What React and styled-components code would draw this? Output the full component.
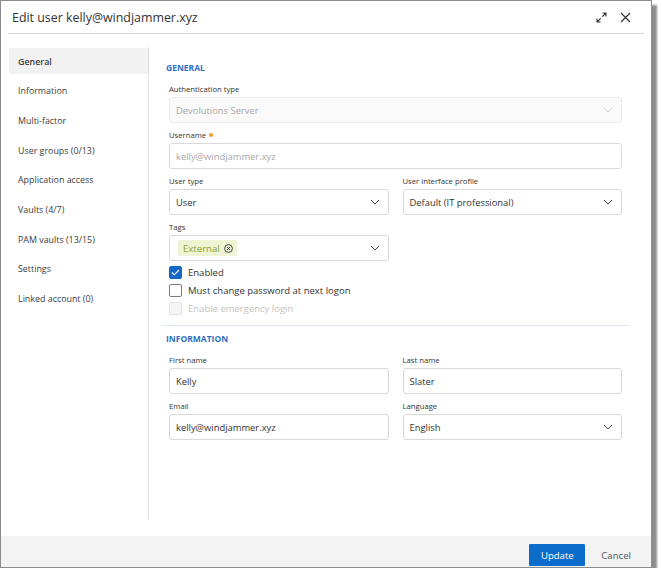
import React from "react";
import styled, { createGlobalStyle } from "styled-components";

const Global = createGlobalStyle`
  html, body { margin: 0; padding: 0; background: #ffffff; }
  body { font-family: "Open Sans", "Noto Sans", sans-serif; color: #333; }
  * { box-sizing: border-box; }
`;

const Dialog = styled.div`
  width: 652px;
  height: 568px;
  border: 1px solid #8c8c8c;
  background: #fff;
  box-shadow: 5px 5px 2px rgba(0, 0, 0, 0.45);
  display: flex;
  flex-direction: column;
`;

const Header = styled.div`
  height: 33px;
  margin: 0 7px;
  padding: 0 4px;
  border-bottom: 1px solid #d6d6d6;
  display: flex;
  align-items: center;
  justify-content: space-between;
  flex: none;
`;

const Title = styled.div`
  font-size: 12.4px;
  color: #333;
`;

const HeaderIcons = styled.div`
  display: flex;
  align-items: center;
  gap: 13px;
  padding-right: 9px;
  color: #333;
`;

const Body = styled.div`
  flex: 1;
  display: flex;
  padding: 13px 0 16px 8px;
`;

const Sidebar = styled.nav`
  width: 140px;
  border-right: 1px solid #e1e1e1;
  display: flex;
  flex-direction: column;
  padding-top: 1px;
`;

const NavItem = styled.div`
  height: 26px;
  margin-bottom: 3.7px;
  padding-left: 9px;
  display: flex;
  align-items: center;
  font-size: 8.9px;
  color: #3c3c3c;
  background: ${(p) => (p.$active ? "#f2f2f2" : "transparent")};
  font-weight: ${(p) => (p.$active ? 600 : 400)};
`;

const Content = styled.div`
  flex: 1;
  padding: 15px 21px 0 13px;
  display: flex;
  flex-direction: column;
`;

const SectionTitle = styled.div`
  height: 12px;
  line-height: 12px;
  font-size: 8.5px;
  font-weight: 700;
  color: #2f6fc4;
  margin-left: 4px;
  margin-bottom: 9px;
`;

const Fields = styled.div`
  padding: 0 8px 0 7px;
  display: grid;
  grid-template-columns: 1fr 1fr;
  column-gap: 14px;
  row-gap: 6px;
`;

const Field = styled.div`
  grid-column: ${(p) => (p.$full ? "1 / span 2" : "auto")};
  display: flex;
  flex-direction: column;
`;

const Label = styled.div`
  height: 12px;
  line-height: 12px;
  font-size: 7.7px;
  color: #333;
  margin-bottom: 2px;
  display: flex;
  align-items: center;
  gap: 3px;
`;

const Required = styled.span`
  width: 4px;
  height: 4px;
  border-radius: 50%;
  background: #f29d1b;
`;

const Input = styled.div`
  height: 26px;
  border: 1px solid #d9d9d9;
  border-radius: 3px;
  padding: 0 8px 0 6px;
  display: flex;
  align-items: center;
  justify-content: space-between;
  font-size: 9.4px;
  color: ${(p) => (p.$muted ? "#a8a8a8" : "#333")};
  background: ${(p) => (p.$disabled ? "#fafafa" : "#fff")};
  border-color: ${(p) => (p.$disabled ? "#ececec" : "#d9d9d9")};
`;

const TagInput = styled(Input)`
  padding-left: 8px;
`;

const Chevron = ({ light }) => (
  <svg width="10" height="6" viewBox="0 0 10 6" fill="none">
    <path d="M1 1l4 4 4-4" stroke={light ? "#c8c8c8" : "#444"} strokeWidth="1" />
  </svg>
);

const Chip = styled.span`
  height: 16px;
  padding: 0 4px 0 5px;
  display: inline-flex;
  align-items: center;
  gap: 4px;
  background: #eef4d4;
  border-radius: 2px;
  color: #8ca52a;
  font-size: 9.6px;
`;

const Checks = styled.div`
  padding: 2px 7px 0;
  display: flex;
  flex-direction: column;
`;

const CheckRow = styled.label`
  height: 18px;
  display: flex;
  align-items: center;
  gap: 6px;
  font-size: 9.5px;
  color: ${(p) => (p.$disabled ? "#c4c4c4" : "#333")};
`;

const Box = styled.span`
  width: 13px;
  height: 13px;
  border-radius: 2px;
  border: 1px solid ${(p) => (p.$checked ? "#1667c4" : p.$disabled ? "#e2e2e2" : "#7a7a7a")};
  background: ${(p) => (p.$checked ? "#1667c4" : p.$disabled ? "#f5f5f5" : "#fff")};
  display: flex;
  align-items: center;
  justify-content: center;
`;

const Divider = styled.div`
  height: 1px;
  background: #dbe7f5;
  margin: 8px 0 7px;
`;

const Footer = styled.div`
  height: 31px;
  flex: none;
  background: #f3f3f3;
  display: flex;
  align-items: center;
  justify-content: flex-end;
  padding-right: 20px;
  gap: 16px;
`;

const PrimaryButton = styled.button`
  width: 56px;
  height: 22px;
  border: none;
  border-radius: 1px;
  background: #0b6ccc;
  color: #fff;
  font-family: inherit;
  font-size: 9.6px;
  margin-top: 7px;
`;

const TextButton = styled.button`
  border: none;
  background: transparent;
  color: #555;
  font-family: inherit;
  font-size: 9.6px;
  padding: 0;
  margin-top: 7px;
`;

const navItems = [
  "General",
  "Information",
  "Multi-factor",
  "User groups (0/13)",
  "Application access",
  "Vaults (4/7)",
  "PAM vaults (13/15)",
  "Settings",
  "Linked account (0)",
];

export default function App() {
  return (
    <>
      <Global />
      <Dialog>
        <Header>
          <Title>Edit user kelly@windjammer.xyz</Title>
          <HeaderIcons>
            <svg width="11" height="11" viewBox="0 0 11 11" fill="none" stroke="#333" strokeWidth="1.1">
              <path d="M6.5 1h3.5v3.5M10 1L6.3 4.7M4.5 10H1V6.5M1 10l3.7-3.7" />
            </svg>
            <svg width="11" height="11" viewBox="0 0 11 11" fill="none" stroke="#333" strokeWidth="1.2">
              <path d="M1 1l9 9M10 1l-9 9" />
            </svg>
          </HeaderIcons>
        </Header>
        <Body>
          <Sidebar>
            {navItems.map((n, i) => (
              <NavItem key={n} $active={i === 0}>{n}</NavItem>
            ))}
          </Sidebar>
          <Content>
            <SectionTitle>GENERAL</SectionTitle>
            <Fields>
              <Field $full>
                <Label>Authentication type</Label>
                <Input $disabled $muted>
                  Devolutions Server
                  <Chevron light />
                </Input>
              </Field>
              <Field $full>
                <Label>Username <Required /></Label>
                <Input $muted>kelly@windjammer.xyz</Input>
              </Field>
              <Field>
                <Label>User type</Label>
                <Input>User<Chevron /></Input>
              </Field>
              <Field>
                <Label>User interface profile</Label>
                <Input>Default (IT professional)<Chevron /></Input>
              </Field>
              <Field>
                <Label>Tags</Label>
                <TagInput>
                  <Chip>
                    External
                    <svg width="9" height="9" viewBox="0 0 9 9" fill="none" stroke="#444" strokeWidth="1">
                      <circle cx="4.5" cy="4.5" r="3.9" />
                      <path d="M3 3l3 3M6 3L3 6" />
                    </svg>
                  </Chip>
                  <Chevron />
                </TagInput>
              </Field>
            </Fields>
            <Checks>
              <CheckRow>
                <Box $checked>
                  <svg width="9" height="7" viewBox="0 0 9 7" fill="none" stroke="#fff" strokeWidth="1.1">
                    <path d="M1 3.5l2.3 2.3L8 1" />
                  </svg>
                </Box>
                Enabled
              </CheckRow>
              <CheckRow>
                <Box />
                Must change password at next logon
              </CheckRow>
              <CheckRow $disabled>
                <Box $disabled />
                Enable emergency login
              </CheckRow>
            </Checks>
            <Divider />
            <SectionTitle>INFORMATION</SectionTitle>
            <Fields>
              <Field>
                <Label>First name</Label>
                <Input>Kelly</Input>
              </Field>
              <Field>
                <Label>Last name</Label>
                <Input>Slater</Input>
              </Field>
              <Field>
                <Label>Email</Label>
                <Input>kelly@windjammer.xyz</Input>
              </Field>
              <Field>
                <Label>Language</Label>
                <Input>English<Chevron /></Input>
              </Field>
            </Fields>
          </Content>
        </Body>
        <Footer>
          <PrimaryButton>Update</PrimaryButton>
          <TextButton>Cancel</TextButton>
        </Footer>
      </Dialog>
    </>
  );
}
